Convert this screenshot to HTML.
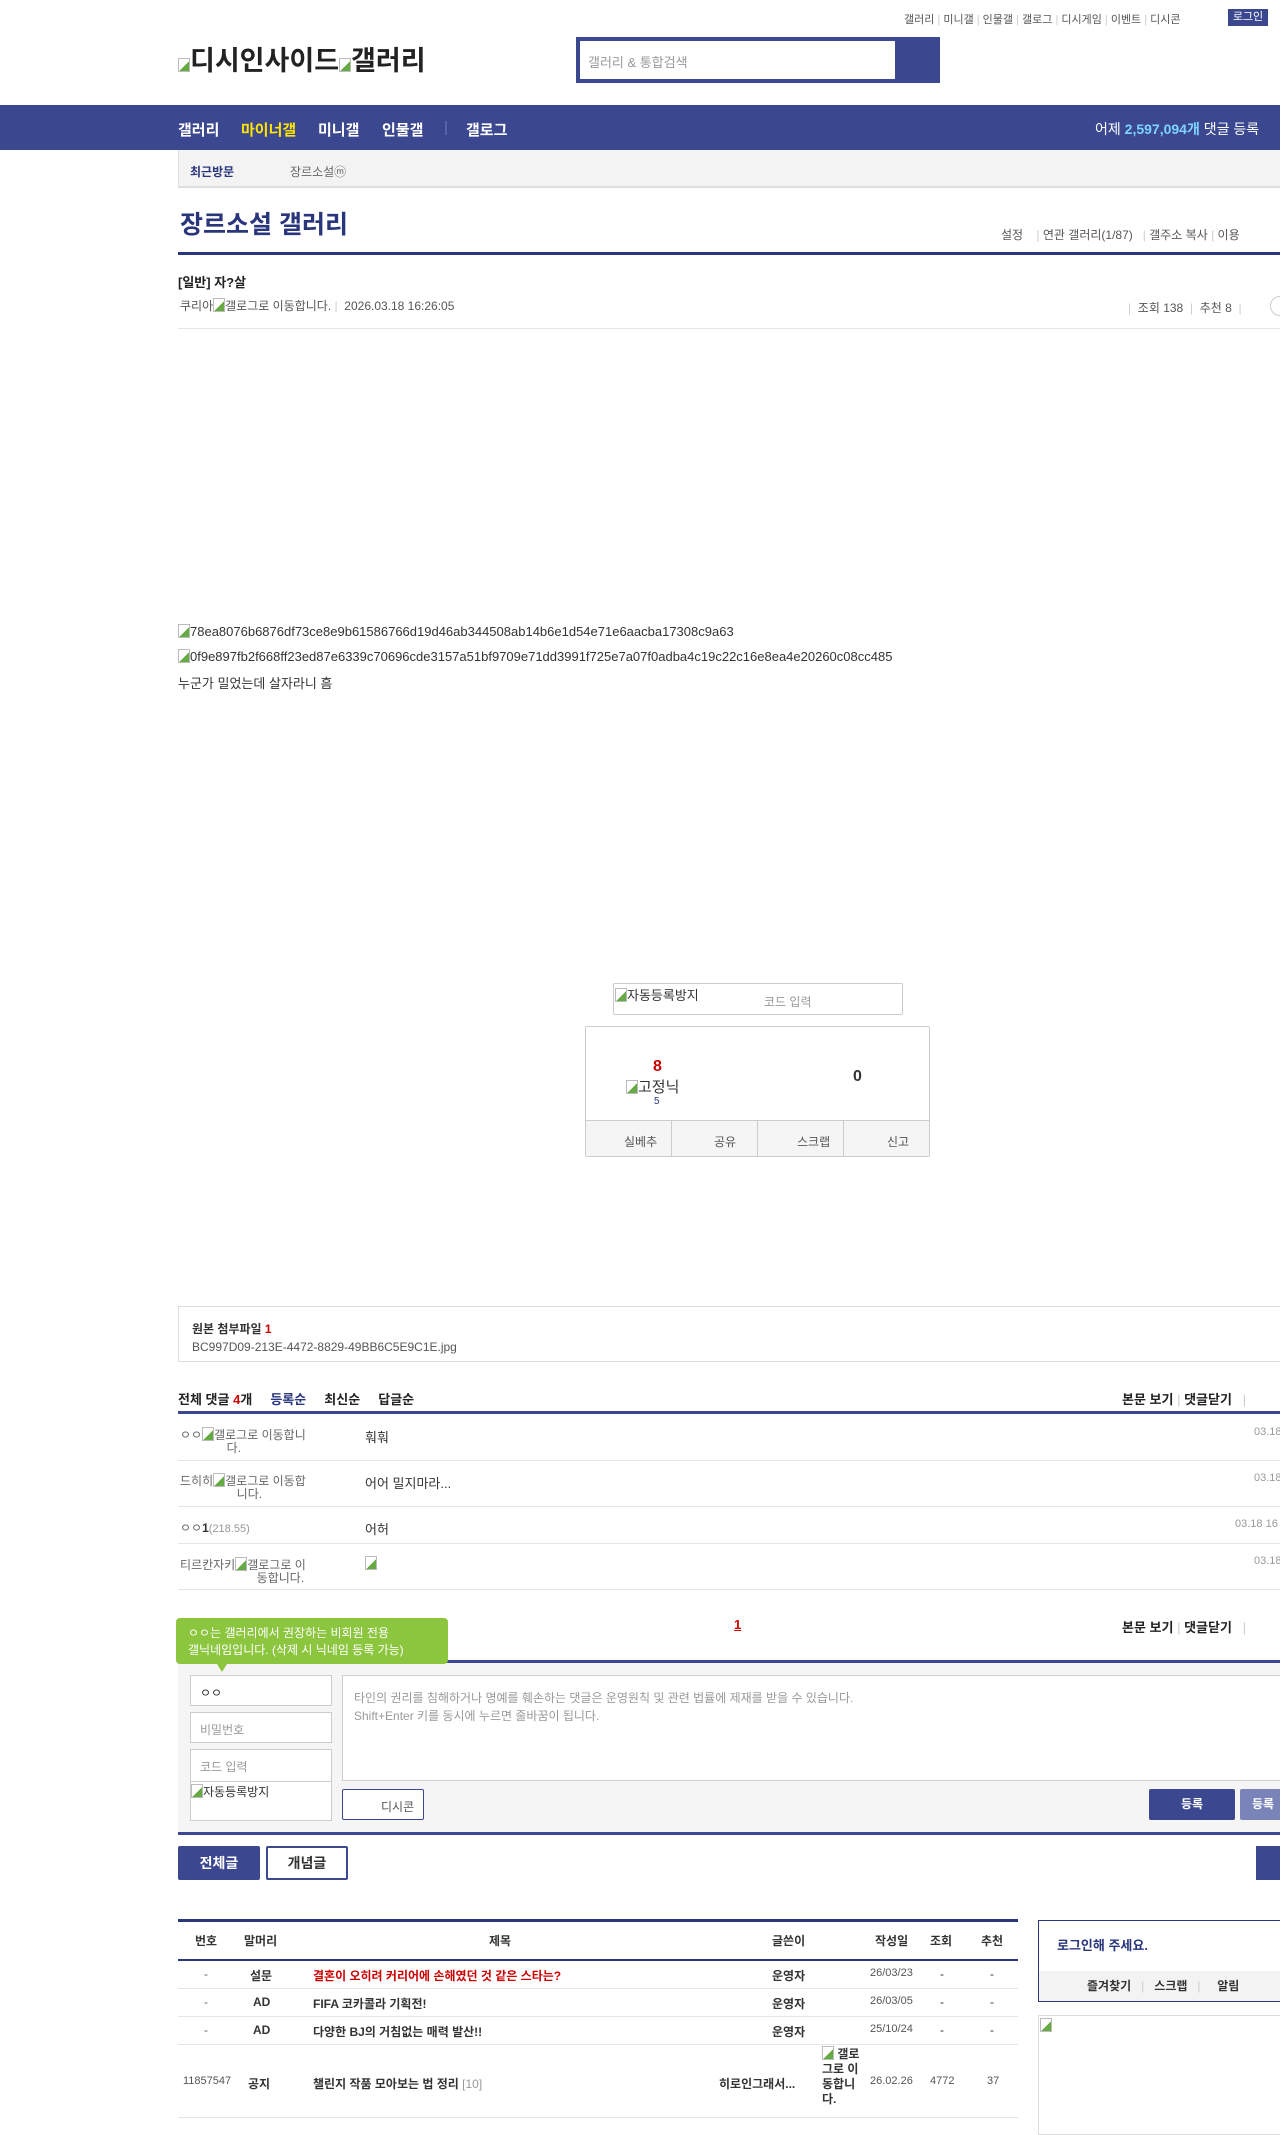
<!DOCTYPE html>
<html><head><meta charset="utf-8"><style>
*{margin:0;padding:0;box-sizing:border-box}
body{width:1280px;height:2124px;position:relative;overflow:hidden;background:#fff;font-family:"Liberation Sans","Noto Sans CJK KR",sans-serif;color:#333;font-size:12px}
.a{position:absolute;white-space:nowrap}
.nav{left:0;top:105px;width:1280px;height:45px;background:#3b4890}
.b{font-weight:bold}
.sep{color:#ccc}
.br{display:inline-block;width:12px;height:14px;border:1px solid #bbb;vertical-align:-2px;background:linear-gradient(135deg,#fff 55%,#6a4 55%)}
.line{position:absolute;height:1px;background:#e5e5e5}
.n{position:absolute;top:119px;font-size:15px;color:#fff;font-weight:bold}
</style></head><body>
<div class="a" style="left:904px;top:11px;font-size:11px;color:#555">갤러리 <span class="sep">|</span> 미니갤 <span class="sep">|</span> 인물갤 <span class="sep">|</span> 갤로그 <span class="sep">|</span> 디시게임 <span class="sep">|</span> 이벤트 <span class="sep">|</span> 디시콘</div>
<div class="a" style="left:1228px;top:9px;width:40px;height:17px;background:#3b4890;color:#fff;font-size:11px;text-align:center;line-height:17px">로그인</div>
<div class="a b" style="left:178px;top:39px;font-size:27px;color:#222"><span class="br"></span>디시인사이드<span class="br"></span>갤러리</div>
<div class="a" style="left:576px;top:37px;width:364px;height:46px;background:#3b4890"></div>
<div class="a" style="left:580px;top:41px;width:315px;height:38px;background:#fff;font-size:13px;color:#999;padding:11px 8px">갤러리 &amp; 통합검색</div>
<div class="a nav"></div>
<div class="n" style="left:178px">갤러리</div>
<div class="n" style="left:241px;color:#ffe400">마이너갤</div>
<div class="n" style="left:318px">미니갤</div>
<div class="n" style="left:382px">인물갤</div>
<div class="n" style="left:444px;color:#6a74b0;font-weight:normal">|</div>
<div class="n" style="left:466px">갤로그</div>
<div class="a" style="left:1095px;top:119px;font-size:14px;color:#fff">어제 <b style="color:#7fd4ff">2,597,094개</b> 댓글 등록</div>
<div class="a" style="left:178px;top:150px;width:1102px;height:38px;background:#f3f3f3;border-left:1px solid #ddd;border-bottom:2px solid #ddd"></div>
<div class="a b" style="left:190px;top:163px;font-size:12px;color:#29367c">최근방문</div>
<div class="a" style="left:290px;top:163px;font-size:12px;color:#666">장르소설ⓜ</div>
<div class="a b" style="left:180px;top:205px;font-size:25px;color:#29367c">장르소설 갤러리</div>
<div class="a" style="left:1001px;top:226px;font-size:12px;color:#555">설정 &nbsp;&nbsp;&nbsp;<span class="sep">|</span> 연관 갤러리(1/87) &nbsp;&nbsp;<span class="sep">|</span> 갤주소 복사 <span class="sep">|</span> 이용</div>
<div class="a" style="left:178px;top:252px;width:1102px;height:3px;background:#29367c"></div>
<div class="a b" style="left:178px;top:272px;font-size:13px;color:#222">[일반] 자?살</div>
<div class="a" style="left:180px;top:297px;font-size:12px;color:#555">쿠리아<span class="br"></span>갤로그로 이동합니다. <span class="sep">|</span> &nbsp;2026.03.18 16:26:05</div>
<div class="a" style="left:1128px;top:299px;font-size:12px;color:#555"><span class="sep">|</span> &nbsp;조회 138 &nbsp;<span class="sep">|</span> &nbsp;추천 8 &nbsp;<span class="sep">|</span></div>
<div class="a" style="left:1270px;top:296px;width:20px;height:20px;border:1px solid #ccc;border-radius:10px"></div>
<div class="line" style="left:178px;top:328px;width:1102px"></div>
<div class="a" style="left:178px;top:624px;font-size:13px;color:#333"><span class="br"></span>78ea8076b6876df73ce8e9b61586766d19d46ab344508ab14b6e1d54e71e6aacba17308c9a63</div>
<div class="a" style="left:178px;top:649px;font-size:13px;color:#333"><span class="br"></span>0f9e897fb2f668ff23ed87e6339c70696cde3157a51bf9709e71dd3991f725e7a07f0adba4c19c22c16e8ea4e20260c08cc485</div>
<div class="a" style="left:178px;top:673px;font-size:13px;color:#333">누군가 밀었는데 살자라니 흠</div>
<div class="a" style="left:613px;top:983px;width:290px;height:32px;border:1px solid #ccc;border-radius:2px"></div>
<div class="a" style="left:615px;top:985px;font-size:13px;color:#333"><span class="br"></span>자동등록방지</div>
<div class="a" style="left:764px;top:993px;font-size:12px;color:#999">코드 입력</div>
<div class="a" style="left:585px;top:1026px;width:345px;height:131px;border:1px solid #ccc;border-radius:2px"></div>
<div class="a" style="left:586px;top:1120px;width:343px;height:36px;background:#f5f5f5;border-top:1px solid #ccc"></div>
<div class="a" style="left:671px;top:1121px;width:1px;height:36px;background:#ccc"></div>
<div class="a" style="left:757px;top:1121px;width:1px;height:36px;background:#ccc"></div>
<div class="a" style="left:843px;top:1121px;width:1px;height:36px;background:#ccc"></div>
<div class="a" style="left:624px;top:1133px;font-size:12px;color:#555">실베추</div>
<div class="a" style="left:714px;top:1133px;font-size:12px;color:#555">공유</div>
<div class="a" style="left:797px;top:1133px;font-size:12px;color:#555">스크랩</div>
<div class="a" style="left:887px;top:1133px;font-size:12px;color:#555">신고</div>
<div class="a b" style="left:653px;top:1058px;font-size:16px;color:#c00">8</div>
<div class="a" style="left:626px;top:1076px;font-size:15px;color:#333"><span class="br"></span>고정닉</div>
<div class="a" style="left:654px;top:1096px;font-size:10px;color:#29367c">5</div>
<div class="a b" style="left:853px;top:1068px;font-size:16px;color:#333">0</div>
<div class="a" style="left:178px;top:1306px;width:1110px;height:56px;border:1px solid #ddd"></div>
<div class="a b" style="left:192px;top:1320px;font-size:12px;color:#333">원본 첨부파일 <span style="color:#c00">1</span></div>
<div class="a" style="left:192px;top:1340px;font-size:12px;color:#555">BC997D09-213E-4472-8829-49BB6C5E9C1E.jpg</div>
<div class="a b" style="left:178px;top:1389px;font-size:13px;color:#222">전체 댓글 <span style="color:#c00">4</span>개 &nbsp;&nbsp;&nbsp;&nbsp;<span style="color:#29367c">등록순</span> &nbsp;&nbsp;&nbsp;&nbsp;최신순 &nbsp;&nbsp;&nbsp;&nbsp;답글순</div>
<div class="a b" style="left:1122px;top:1389px;font-size:13px;color:#222">본문 보기 <span class="sep" style="font-weight:normal">|</span> 댓글닫기 &nbsp;&nbsp;<span class="sep" style="font-weight:normal">|</span></div>
<div class="a" style="left:178px;top:1411px;width:1102px;height:3px;background:#3b4890"></div>
<div class="a" style="left:180px;top:1427px;font-size:12px;color:#666;line-height:13px">ㅇㅇ<span class="br"></span>갤로그로 이동합니<br>&nbsp;&nbsp;&nbsp;&nbsp;&nbsp;&nbsp;&nbsp;&nbsp;&nbsp;&nbsp;&nbsp;&nbsp;&nbsp;&nbsp;다.</div>
<div class="a" style="left:365px;top:1427px;font-size:13px">훠훠</div>
<div class="a" style="left:1254px;top:1426px;font-size:11px;color:#999">03.18</div>
<div class="line" style="left:178px;top:1460px;width:1102px"></div>
<div class="a" style="left:180px;top:1473px;font-size:12px;color:#666;line-height:13px">드히히<span class="br"></span>갤로그로 이동합<br>&nbsp;&nbsp;&nbsp;&nbsp;&nbsp;&nbsp;&nbsp;&nbsp;&nbsp;&nbsp;&nbsp;&nbsp;&nbsp;&nbsp;&nbsp;&nbsp;&nbsp;니다.</div>
<div class="a" style="left:365px;top:1473px;font-size:13px">어어 밀지마라...</div>
<div class="a" style="left:1254px;top:1472px;font-size:11px;color:#999">03.18</div>
<div class="line" style="left:178px;top:1506px;width:1102px"></div>
<div class="a" style="left:180px;top:1519px;font-size:12px;color:#666">ㅇㅇ<b style="color:#333">1</b><span style="font-size:11px;color:#999">(218.55)</span></div>
<div class="a" style="left:365px;top:1519px;font-size:13px">어허</div>
<div class="a" style="left:1235px;top:1518px;font-size:11px;color:#999">03.18 16</div>
<div class="line" style="left:178px;top:1543px;width:1102px"></div>
<div class="a" style="left:180px;top:1557px;font-size:12px;color:#666;line-height:13px">티르칸자키<span class="br"></span>갤로그로 이<br>&nbsp;&nbsp;&nbsp;&nbsp;&nbsp;&nbsp;&nbsp;&nbsp;&nbsp;&nbsp;&nbsp;&nbsp;&nbsp;&nbsp;&nbsp;&nbsp;&nbsp;&nbsp;&nbsp;&nbsp;&nbsp;&nbsp;&nbsp;동합니다.</div>
<div class="a" style="left:365px;top:1556px"><span class="br"></span></div>
<div class="a" style="left:1254px;top:1555px;font-size:11px;color:#999">03.18</div>
<div class="line" style="left:178px;top:1589px;width:1102px"></div>
<div class="a b" style="left:734px;top:1617px;font-size:13px;color:#c00;text-decoration:underline">1</div>
<div class="a b" style="left:1122px;top:1617px;font-size:13px;color:#222">본문 보기 <span class="sep" style="font-weight:normal">|</span> 댓글닫기 &nbsp;&nbsp;<span class="sep" style="font-weight:normal">|</span></div>
<div class="a" style="left:178px;top:1660px;width:1102px;height:3px;background:#3b4890"></div>
<div class="a" style="left:178px;top:1663px;width:1102px;height:170px;background:#f5f5f5"></div>
<div class="a" style="left:176px;top:1618px;width:272px;height:46px;background:#8cc63f;border-radius:4px;color:#fff;font-size:12px;padding:7px 12px;line-height:17px;white-space:normal">ㅇㅇ는 갤러리에서 권장하는 비회원 전용<br>갤닉네임입니다. (삭제 시 닉네임 등록 가능)</div>
<div class="a" style="left:0;top:0;width:0;height:0;transform:translate(217px,1664px);border-left:5px solid transparent;border-right:5px solid transparent;border-top:8px solid #8cc63f"></div>
<div class="a" style="left:190px;top:1675px;width:142px;height:31px;border:1px solid #ccc;background:#fff;font-size:12px;padding:8px 9px;color:#333">ㅇㅇ</div>
<div class="a" style="left:190px;top:1712px;width:142px;height:31px;border:1px solid #ccc;background:#fff;font-size:12px;padding:8px 9px;color:#999">비밀번호</div>
<div class="a" style="left:190px;top:1749px;width:142px;height:72px;border:1px solid #ccc;background:#fff;font-size:12px;padding:8px 9px;color:#999">코드 입력</div>
<div class="a" style="left:190px;top:1781px;width:142px;height:1px;background:#ccc"></div>
<div class="a" style="left:191px;top:1783px;font-size:12px;color:#333"><span class="br"></span>자동등록방지</div>
<div class="a" style="left:342px;top:1675px;width:940px;height:106px;border:1px solid #ccc;background:#fff"></div>
<div class="a" style="left:354px;top:1689px;font-size:12px;color:#999;line-height:18px">타인의 권리를 침해하거나 명예를 훼손하는 댓글은 운영원칙 및 관련 법률에 제재를 받을 수 있습니다.<br>Shift+Enter 키를 동시에 누르면 줄바꿈이 됩니다.</div>
<div class="a" style="left:342px;top:1789px;width:82px;height:31px;border:1px solid #3b4890;border-radius:2px;background:#fff;font-size:12px;color:#555;padding:8px 0 0 38px">디시콘</div>
<div class="a b" style="left:1149px;top:1789px;width:86px;height:31px;background:#3b4890;border-radius:2px;color:#fff;font-size:12px;text-align:center;line-height:31px">등록</div>
<div class="a b" style="left:1240px;top:1789px;width:60px;height:31px;background:#7a84b8;border-radius:2px;color:#fff;font-size:12px;padding-left:12px;line-height:31px">등록</div>
<div class="a" style="left:178px;top:1832px;width:1102px;height:3px;background:#3b4890"></div>
<div class="a b" style="left:178px;top:1846px;width:82px;height:34px;background:#3b4890;border-radius:2px;color:#fff;font-size:14px;text-align:center;line-height:34px">전체글</div>
<div class="a b" style="left:266px;top:1846px;width:82px;height:34px;border:2px solid #3b4890;border-radius:2px;color:#333;font-size:14px;text-align:center;line-height:30px">개념글</div>
<div class="a" style="left:1256px;top:1846px;width:30px;height:34px;background:#3b4890"></div>
<div class="a" style="left:178px;top:1919px;width:840px;height:3px;background:#29367c"></div>
<div class="a b" style="left:178px;top:1932px;width:840px;font-size:12px;color:#333">
<span class="a" style="left:17px">번호</span><span class="a" style="left:66px">말머리</span><span class="a" style="left:311px">제목</span><span class="a" style="left:594px">글쓴이</span><span class="a" style="left:697px">작성일</span><span class="a" style="left:752px">조회</span><span class="a" style="left:803px">추천</span></div>
<div class="a" style="left:178px;top:1959px;width:840px;height:2px;background:#29367c"></div>
<div class="a" style="left:178px;top:1967px;width:840px;font-size:12px">
<span class="a" style="left:26px;color:#666">-</span><span class="a b" style="left:72px">설문</span><span class="a b" style="left:135px;color:#c00">결혼이 오히려 커리어에 손해였던 것 같은 스타는?</span><span class="a b" style="left:594px">운영자</span><span class="a" style="left:692px;font-size:11px;color:#555">26/03/23</span><span class="a" style="left:762px">-</span><span class="a" style="left:812px">-</span></div>
<div class="line" style="left:178px;top:1988px;width:840px"></div>
<div class="a" style="left:178px;top:1995px;width:840px;font-size:12px">
<span class="a" style="left:26px;color:#666">-</span><span class="a b" style="left:75px">AD</span><span class="a b" style="left:135px">FIFA 코카콜라 기획전!</span><span class="a b" style="left:594px">운영자</span><span class="a" style="left:692px;font-size:11px;color:#555">26/03/05</span><span class="a" style="left:762px">-</span><span class="a" style="left:812px">-</span></div>
<div class="line" style="left:178px;top:2016px;width:840px"></div>
<div class="a" style="left:178px;top:2023px;width:840px;font-size:12px">
<span class="a" style="left:26px;color:#666">-</span><span class="a b" style="left:75px">AD</span><span class="a b" style="left:135px">다양한 BJ의 거침없는 매력 발산!!</span><span class="a b" style="left:594px">운영자</span><span class="a" style="left:692px;font-size:11px;color:#555">25/10/24</span><span class="a" style="left:762px">-</span><span class="a" style="left:812px">-</span></div>
<div class="line" style="left:178px;top:2044px;width:840px"></div>
<div class="a" style="left:178px;top:2075px;width:840px;font-size:12px">
<span class="a" style="left:5px;font-size:11px;color:#555">11857547</span><span class="a b" style="left:70px">공지</span><span class="a b" style="left:135px">챌린지 작품 모아보는 법 정리 <span style="color:#999;font-weight:normal">[10]</span></span><span class="a b" style="left:541px">히로인그래서...</span><span class="a" style="left:692px;font-size:11px;color:#555">26.02.26</span><span class="a" style="left:752px;font-size:11px;color:#555">4772</span><span class="a" style="left:809px;font-size:11px;color:#555">37</span></div>
<div class="a b" style="left:822px;top:2046px;font-size:12px;line-height:15px;white-space:normal;width:42px"><span class="br"></span> 갤로그로 이동합니다.</div>
<div class="line" style="left:178px;top:2117px;width:840px"></div>
<div class="a" style="left:1038px;top:1920px;width:250px;height:82px;border:1px solid #29367c"></div>
<div class="a" style="left:1039px;top:1971px;width:250px;height:30px;background:#f3f3f3"></div>
<div class="a b" style="left:1057px;top:1935px;font-size:13px;color:#29367c">로그인해 주세요.</div>
<div class="a b" style="left:1087px;top:1977px;font-size:12px;color:#333">즐겨찾기 &nbsp;&nbsp;<span class="sep" style="font-weight:normal">|</span> &nbsp;&nbsp;스크랩 &nbsp;&nbsp;<span class="sep" style="font-weight:normal">|</span> &nbsp;&nbsp;&nbsp;&nbsp;알림</div>
<div class="a" style="left:1038px;top:2015px;width:250px;height:120px;border:1px solid #ddd"></div>
<div class="a" style="left:1040px;top:2018px"><span class="br"></span></div>
</body></html>
